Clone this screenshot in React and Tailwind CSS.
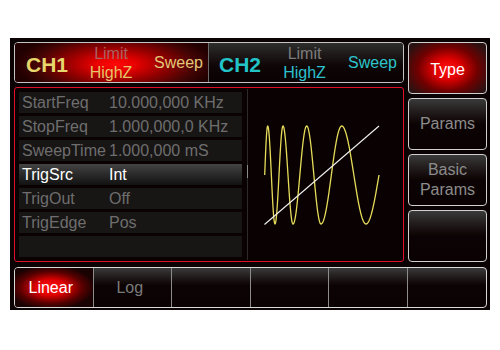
import React from "react";

const rows = [
  ["StartFreq", "10.000,000 KHz"],
  ["StopFreq", "1.000,000,0 KHz"],
  ["SweepTime", "1.000,000 mS"],
  ["TrigSrc", "Int", true],
  ["TrigOut", "Off"],
  ["TrigEdge", "Pos"],
  ["", ""],
];

const knots = [
  [0, 265.7], [1, 268.7], [3, 276], [5, 284], [7, 294], [9, 307.7],
  [11, 322], [13, 342.7], [15, 367], [16, 380],
];

function xAt(p) {
  for (let i = 0; i < knots.length - 1; i++) {
    const [p0, x0] = knots[i];
    const [p1, x1] = knots[i + 1];
    if (p >= p0 && p <= p1) return x0 + ((p - p0) / (p1 - p0)) * (x1 - x0);
  }
  return knots[knots.length - 1][1];
}

function Wave() {
  const pts = [];
  for (let p = 0; p <= 16.0001; p += 0.04) {
    const x = xAt(p);
    const y = 175 - 49 * Math.sin((p * Math.PI) / 2);
    pts.push(`${x.toFixed(2)},${y.toFixed(2)}`);
  }
  return (
    <svg width="155" height="173" viewBox="249 88 155 173" className="block">
      <polyline points={pts.join(" ")} fill="none" stroke="#e6dc5a" strokeWidth="1.3" />
      <line x1="265.5" y1="224.5" x2="380" y2="126" stroke="#f2f2f2" strokeWidth="1.1" />
    </svg>
  );
}

function SideButton({ children, active }) {
  return (
    <div
      className={
        "h-[52px] border border-[#cfcfcf] rounded-[4px] flex flex-col items-center justify-center text-[16px] leading-[20px] " +
        (active
          ? "text-white pt-[4px] [background-image:radial-gradient(ellipse_46px_34px_at_50%_52%,#ff1414_0%,#e00000_30%,#700000_65%,#2a1212_100%)]"
          : "text-[#8c8c8c] bg-linear-to-b from-[#3a3a3a] via-[#0c0404] via-50% to-[#0a0202]")
      }
    >
      {children}
    </div>
  );
}

export default function App() {
  return (
    <div className="w-[500px] h-[350px] bg-white pt-[38px] pl-[10px] font-['Liberation_Sans',Arial,sans-serif]">
      <div className="w-[480px] h-[272px] bg-[#0b0203] pt-[4px] pl-[4px] pr-[3px] flex flex-col gap-[5px]">
        <div className="flex gap-[4px] h-[220px]">
          <div className="w-[390px] flex flex-col gap-[4px]">
            {/* Top channel bar */}
            <div className="h-[41px] flex border border-[#c4c4c4] rounded-[4px] overflow-hidden">
              <div className="w-[194px] border-r border-[#6a6a6a] flex items-center justify-between pl-[11px] pr-[5px] [background-image:radial-gradient(ellipse_100px_34px_at_52%_55%,#ff0808_0%,#e80000_20%,#920000_50%,#420404_80%,#200000_100%)]">
                <span className="text-[21px] font-bold leading-none text-[#e6d66c] mt-[3px]">CH1</span>
                <div className="flex flex-col items-center text-[16px] leading-[19px]">
                  <span className="text-[#a86262]">Limit</span>
                  <span className="text-[#e8c46a]">HighZ</span>
                </div>
                <span className="text-[16px] leading-none text-[#e2c878]">Sweep</span>
              </div>
              <div className="flex-1 flex items-center justify-between pl-[10px] pr-[6px] bg-linear-to-b from-[#2e2e2e] via-[#0e0606] via-60% to-[#0a0202]">
                <span className="text-[21px] font-bold leading-none text-[#22c4c8] mt-[3px]">CH2</span>
                <div className="flex flex-col items-center text-[16px] leading-[19px]">
                  <span className="text-[#7c7c7c]">Limit</span>
                  <span className="text-[#2cc0d0]">HighZ</span>
                </div>
                <span className="text-[16px] leading-none text-[#2cc4cc]">Sweep</span>
              </div>
            </div>

            {/* Main panel */}
            <div className="h-[175px] border border-[#e0102c] rounded-[3px] bg-[#0a0202] flex">
              <div className="w-[228px] pl-[4px] pt-[4px] flex flex-col gap-[3px]">
                {rows.map(([label, value, active], i) => (
                  <div
                    key={i}
                    className={
                      "h-[21px] flex items-center pl-[3px] text-[16px] leading-[21px] whitespace-nowrap " +
                      (active
                        ? "text-white bg-linear-to-b from-[#444444] to-[#121212]"
                        : "text-[#6e6e6e] bg-[#181515]")
                    }
                  >
                    <span className="w-[87px] shrink-0">{label}</span>
                    <span>{value}</span>
                  </div>
                ))}
              </div>
              <div className="ml-[5px] w-[1px] my-[1px] bg-[#2e2a2a] relative">
                <div className="absolute left-0 top-[76px] w-[1px] h-[13px] bg-[#8a8a8a]" />
              </div>
              <div className="flex-1">
                <Wave />
              </div>
            </div>
          </div>

          {/* Right side buttons */}
          <div className="w-[79px] flex flex-col gap-[4px]">
            <SideButton active>Type</SideButton>
            <SideButton>Params</SideButton>
            <SideButton>
              <span>Basic</span>
              <span>Params</span>
            </SideButton>
            <SideButton />
          </div>
        </div>

        {/* Bottom bar */}
        <div className="w-[473px] h-[41px] grid grid-cols-6 border border-[#d8d8d8] rounded-[4px] overflow-hidden bg-linear-to-b from-[#3a3a3a] via-[#0c0404] via-45% to-[#0a0202]">
          <div className="border-r border-[#8c8c8c] flex items-center justify-center pr-[6px] text-[16px] text-white [background-image:radial-gradient(ellipse_44px_22px_at_46%_50%,#ff1414_0%,#e00000_35%,#580000_72%,#180202_100%)]">
            Linear
          </div>
          <div className="border-r border-[#8c8c8c] flex items-center justify-center pr-[5px] text-[16px] text-[#7a7a7a]">
            Log
          </div>
          <div className="border-r border-[#8c8c8c]" />
          <div className="border-r border-[#8c8c8c]" />
          <div className="border-r border-[#8c8c8c]" />
          <div />
        </div>
      </div>
    </div>
  );
}
